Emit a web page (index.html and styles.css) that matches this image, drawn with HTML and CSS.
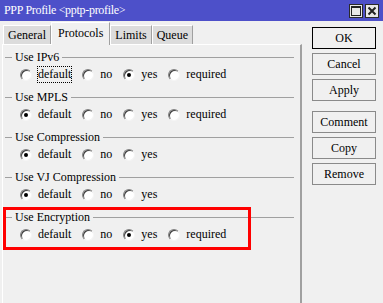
FILE: index.html
```html
<!DOCTYPE html>
<html lang="en">
<head>
    <meta charset="UTF-8">
    <title>PPP Profile</title>
    <link rel="stylesheet" href="styles.css">
</head>
<body>
    <div class="window">
        <div class="titlebar">
            <span class="title">PPP Profile &lt;pptp-profile&gt;</span>
            <div class="title-buttons">
                <span class="tbtn"><svg width="12" height="12" viewBox="0 0 12 12"><rect x="1.5" y="1.5" width="9" height="9" fill="none" stroke="#222" stroke-width="1"/><rect x="1" y="1" width="10" height="2" fill="#222"/></svg></span>
                <span class="tbtn"><svg width="12" height="12" viewBox="0 0 12 12"><path d="M2.5 2.5 L9.5 9.5 M9.5 2.5 L2.5 9.5" stroke="#222" stroke-width="2"/></svg></span>
            </div>
        </div>

        <div class="main">
            <div class="left">
                <div class="tabs">
                    <span class="tab">General</span>
                    <span class="tab active">Protocols</span>
                    <span class="tab">Limits</span>
                    <span class="tab">Queue</span>
                </div>

                <div class="panel">
                    <div class="group">
                        <div class="group-head"><span class="dash"></span><span>Use IPv6</span><span class="rule"></span></div>
                        <div class="radios">
                            <label class="radio"><span class="dot"></span><span class="focus">default</span></label>
                            <label class="radio"><span class="dot"></span>no</label>
                            <label class="radio"><span class="dot on"></span>yes</label>
                            <label class="radio"><span class="dot"></span>required</label>
                        </div>
                    </div>

                    <div class="group">
                        <div class="group-head"><span class="dash"></span><span>Use MPLS</span><span class="rule"></span></div>
                        <div class="radios">
                            <label class="radio"><span class="dot on"></span>default</label>
                            <label class="radio"><span class="dot"></span>no</label>
                            <label class="radio"><span class="dot"></span>yes</label>
                            <label class="radio"><span class="dot"></span>required</label>
                        </div>
                    </div>

                    <div class="group">
                        <div class="group-head"><span class="dash"></span><span>Use Compression</span><span class="rule"></span></div>
                        <div class="radios">
                            <label class="radio"><span class="dot on"></span>default</label>
                            <label class="radio"><span class="dot"></span>no</label>
                            <label class="radio"><span class="dot"></span>yes</label>
                        </div>
                    </div>

                    <div class="group">
                        <div class="group-head"><span class="dash"></span><span>Use VJ Compression</span><span class="rule"></span></div>
                        <div class="radios">
                            <label class="radio"><span class="dot on"></span>default</label>
                            <label class="radio"><span class="dot"></span>no</label>
                            <label class="radio"><span class="dot"></span>yes</label>
                        </div>
                    </div>

                    <div class="group marked">
                        <div class="group-head"><span class="dash"></span><span>Use Encryption</span><span class="rule"></span></div>
                        <div class="radios">
                            <label class="radio"><span class="dot"></span>default</label>
                            <label class="radio"><span class="dot"></span>no</label>
                            <label class="radio"><span class="dot on"></span>yes</label>
                            <label class="radio"><span class="dot"></span>required</label>
                        </div>
                    </div>
                </div>
            </div>

            <div class="buttons">
                <button class="default">OK</button>
                <button>Cancel</button>
                <button>Apply</button>
                <button class="spaced">Comment</button>
                <button>Copy</button>
                <button>Remove</button>
            </div>
        </div>
    </div>
</body>
</html>
```

FILE: styles.css
```css
body {
    margin: 0;
    padding: 0;
    background-color: #f0f0f0;
    font-family: "Liberation Serif", "Times New Roman", serif;
    font-size: 12px;
    color: #000;
}

.window {
    width: 383px;
    height: 303px;
    display: flex;
    flex-direction: column;
    overflow: hidden;
}

.titlebar {
    height: 21px;
    background-color: #4d50c9;
    color: #fff;
    display: flex;
    align-items: center;
    justify-content: space-between;
    padding: 0 4px 0 4px;
}

.title {
    font-size: 12px;
    letter-spacing: -0.3px;
}

.title-buttons {
    display: flex;
    gap: 2px;
}

.tbtn {
    width: 14px;
    height: 14px;
    background-color: #e8e8e8;
    border: 1px solid #2a2a2a;
    box-sizing: border-box;
    display: flex;
    align-items: center;
    justify-content: center;
}

.main {
    flex: 1;
    display: flex;
}

.left {
    width: 300px;
    margin-left: 2px;
    display: flex;
    flex-direction: column;
}

.tabs {
    display: flex;
    align-items: flex-end;
    height: 23px;
    padding-left: 1px;
}

.tab {
    height: 18px;
    line-height: 18px;
    padding: 0 4px;
    background-color: #dcdcdc;
    border: 1px solid #fff;
    border-bottom: none;
    border-right: 1px solid #a0a0a0;
}

.tab.active {
    height: 22px;
    line-height: 20px;
    padding: 0 6px;
    background-color: #f0f0f0;
    margin-bottom: -1px;
    position: relative;
}

.panel {
    flex: 1;
    border-top: 1px solid #fff;
    border-left: 1px solid #fff;
    border-right: 2px solid #a0a0a0;
    padding: 5px 6px 0 2px;
}

.group {
    height: 40px;
}

.group-head {
    display: flex;
    align-items: center;
    height: 15px;
}

.dash {
    width: 7px;
    height: 1px;
    background-color: #a0a0a0;
    margin-right: 3px;
}

.rule {
    flex: 1;
    height: 1px;
    background-color: #a0a0a0;
    margin-left: 3px;
}

.radios {
    display: flex;
    align-items: center;
    height: 15px;
    margin-top: 2px;
    padding-left: 15px;
}

.radio {
    display: flex;
    align-items: center;
    margin-right: 11px;
}

.dot {
    width: 12px;
    height: 12px;
    box-sizing: border-box;
    border-radius: 50%;
    background-color: #fff;
    border: 1px solid;
    border-color: #808080 #f4f4f4 #f4f4f4 #808080;
    box-shadow: inset 1px 1px 0 #404040;
    margin-right: 6px;
    display: flex;
    align-items: center;
    justify-content: center;
}

.dot.on::after {
    content: "";
    width: 4px;
    height: 4px;
    border-radius: 50%;
    background-color: #000;
}

.focus {
    outline: 1px dotted #000;
    outline-offset: 0;
}

.marked {
    position: relative;
}

.marked::after {
    content: "";
    position: absolute;
    left: -2px;
    top: -3px;
    width: 242px;
    height: 37px;
    border: 3px solid #ff0000;
}

.buttons {
    display: flex;
    flex-direction: column;
    padding: 6px 0 0 10px;
}

button {
    width: 64px;
    height: 22px;
    margin-bottom: 4px;
    font-family: "Liberation Serif", "Times New Roman", serif;
    font-size: 12px;
    background-color: #f0f0f0;
    border: 1px solid #8a8a8a;
    padding: 0;
    color: #000;
}

button.default {
    border: 1px solid #000;
}

button.spaced {
    margin-top: 6px;
}
```
